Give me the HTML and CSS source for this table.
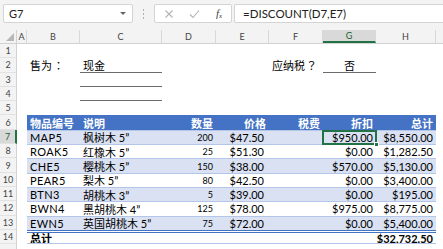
FILE: index.html
```html
<!DOCTYPE html>
<html lang="zh">
<head>
<meta charset="utf-8">
<title>Sheet</title>
<link rel="stylesheet" href="styles.css">
</head>
<body>
<div class="app">
  <div class="toolbar">
    <div class="namebox"><span class="ref">G7</span><span class="caret"></span></div>
    <div class="dots"><i></i><i></i><i></i></div>
    <div class="fxbox">
      <svg class="ico" width="10" height="10" viewBox="0 0 10 10"><path d="M1.5 1.5 L8.5 8.5 M8.5 1.5 L1.5 8.5" stroke="#b3b3b3" stroke-width="1.1" fill="none"/></svg>
      <svg class="ico" width="11" height="10" viewBox="0 0 11 10"><path d="M1 5.5 L4 8.5 L10 1.5" stroke="#b3b3b3" stroke-width="1.1" fill="none"/></svg>
      <span class="fx">f<sub>x</sub></span>
    </div>
    <div class="formula">=DISCOUNT(D7,E7)</div>
  </div>

  <div class="sheet">
    <div class="row colhead">
      <div class="corner"><span class="tri"></span></div>
      <div class="ch">A</div><div class="ch">B</div><div class="ch">C</div><div class="ch">D</div>
      <div class="ch">E</div><div class="ch">F</div><div class="ch sel">G</div><div class="ch">H</div><div class="ch last"></div>
    </div>

    <div class="row"><div class="rh">1</div><div></div><div></div><div></div><div></div><div></div><div></div><div></div><div></div><div></div></div>
    <div class="row"><div class="rh">2</div><div></div><div class="c">售为<span class="pun">：</span></div><div class="c line">现金</div><div></div><div></div><div class="c">应纳税<span class="pun">？</span></div><div class="c line ctr">否</div><div></div><div></div></div>
    <div class="row"><div class="rh">3</div><div></div><div></div><div class="c line"></div><div></div><div></div><div></div><div></div><div></div><div></div></div>
    <div class="row"><div class="rh">4</div><div></div><div></div><div class="c line"></div><div></div><div></div><div></div><div></div><div></div><div></div></div>
    <div class="row"><div class="rh">5</div><div></div><div></div><div></div><div></div><div></div><div></div><div></div><div></div><div></div></div>

    <div class="row thead"><div class="rh">6</div><div></div>
      <div class="c">物品编号</div><div class="c">说明</div><div class="c r">数量</div><div class="c r">价格</div><div class="c r">税费</div><div class="c r">折扣</div><div class="c r">总计</div><div></div>
    </div>

    <div class="row band"><div class="rh sel">7</div><div></div>
      <div class="c code">MAP5</div><div class="c">枫树木 5”</div><div class="c r qty">200</div><div class="c r pr">$47.50</div><div class="c"></div><div class="c r active">$950.00<span class="handle"></span></div><div class="c r">$8,550.00</div><div></div>
    </div>
    <div class="row plain"><div class="rh">8</div><div></div>
      <div class="c code">ROAK5</div><div class="c">红橡木 5”</div><div class="c r qty">25</div><div class="c r pr">$51.30</div><div class="c"></div><div class="c r">$0.00</div><div class="c r">$1,282.50</div><div></div>
    </div>
    <div class="row band"><div class="rh">9</div><div></div>
      <div class="c code">CHE5</div><div class="c">樱桃木 5”</div><div class="c r qty">150</div><div class="c r pr">$38.00</div><div class="c"></div><div class="c r">$570.00</div><div class="c r">$5,130.00</div><div></div>
    </div>
    <div class="row plain"><div class="rh">10</div><div></div>
      <div class="c code">PEAR5</div><div class="c">梨木 5”</div><div class="c r qty">80</div><div class="c r pr">$42.50</div><div class="c"></div><div class="c r">$0.00</div><div class="c r">$3,400.00</div><div></div>
    </div>
    <div class="row band"><div class="rh">11</div><div></div>
      <div class="c code">BTN3</div><div class="c">胡桃木 3”</div><div class="c r qty">5</div><div class="c r pr">$39.00</div><div class="c"></div><div class="c r">$0.00</div><div class="c r">$195.00</div><div></div>
    </div>
    <div class="row plain"><div class="rh">12</div><div></div>
      <div class="c code">BWN4</div><div class="c">黑胡桃木 4”</div><div class="c r qty">125</div><div class="c r pr">$78.00</div><div class="c"></div><div class="c r">$975.00</div><div class="c r">$8,775.00</div><div></div>
    </div>
    <div class="row band"><div class="rh">13</div><div></div>
      <div class="c code">EWN5</div><div class="c">英国胡桃木 5”</div><div class="c r qty">75</div><div class="c r pr">$72.00</div><div class="c"></div><div class="c r">$0.00</div><div class="c r">$5,400.00</div><div></div>
    </div>
    <div class="row total"><div class="rh">14</div><div></div>
      <div class="c b">总计</div><div class="c"></div><div class="c"></div><div class="c"></div><div class="c"></div><div class="c"></div><div class="c r b">$32,732.50</div><div></div>
    </div>
    <div class="row"><div class="rh"></div><div></div><div></div><div></div><div></div><div></div><div></div><div></div><div></div><div></div></div>
  </div>
</div>
</body>
</html>
```

FILE: styles.css
```css
* { box-sizing: border-box; }
html, body { margin: 0; padding: 0; }
body {
  width: 443px;
  height: 249px;
  overflow: hidden;
  background: #ffffff;
  font-family: Lato, "Noto Sans CJK SC", sans-serif;
  color: #000;
}
.app { width: 443px; height: 249px; overflow: hidden; }

.toolbar {
  height: 30px;
  background: #f3f3f3;
  display: flex;
  align-items: flex-start;
  padding: 4px 0 0 3px;
}
.namebox {
  width: 130px;
  height: 19px;
  background: #fff;
  border: 1px solid #d4d4d4;
  border-radius: 2px;
  display: flex;
  align-items: center;
  justify-content: space-between;
  padding: 0 6px 0 5px;
  font-size: 11px;
  color: #222;
}
.caret {
  width: 0; height: 0;
  border-left: 3px solid transparent;
  border-right: 3px solid transparent;
  border-top: 3px solid #666;
}
.dots {
  width: 21px;
  height: 19px;
  display: flex;
  flex-direction: column;
  align-items: center;
  justify-content: center;
  gap: 2px;
}
.dots i { display: block; width: 1px; height: 2px; background: #b0b0b0; }
.fxbox {
  width: 78px;
  height: 19px;
  background: #fff;
  border: 1px solid #d4d4d4;
  border-radius: 2px;
  display: flex;
  align-items: center;
  padding: 0 4px 0 9px;
  gap: 15px;
}
.fx {
  font-family: "Liberation Serif", serif;
  font-style: italic;
  font-size: 11px;
  color: #444;
  margin-left: 1px;
}
.fx sub { font-size: 7px; vertical-align: -1px; }
.formula {
  margin-left: 2px;
  flex: 1;
  height: 19px;
  background: #fff;
  border: 1px solid #d4d4d4;
  border-right: none;
  border-radius: 2px 0 0 2px;
  display: flex;
  align-items: center;
  padding-left: 8px;
  font-size: 11.5px;
  color: #222;
}

.sheet { display: flex; flex-direction: column; }
.row {
  display: grid;
  grid-template-columns: 17px 10px 53px 82px 54px 53px 54px 53px 60px 1fr;
  height: 14.3px;
  font-size: 11px;
}
.row > div { min-width: 0; }
.colhead {
  height: 14px;
  background: #f3f3f3;
  border-bottom: 1px solid #d2d2d2;
}
.corner { position: relative; border-right: 1px solid #d2d2d2; }
.tri {
  position: absolute;
  right: 2px; bottom: 2px;
  width: 0; height: 0;
  border-left: 8px solid transparent;
  border-bottom: 8px solid #b8b8b8;
}
.ch {
  border-right: 1px solid #d8d8d8;
  display: flex;
  align-items: center;
  justify-content: center;
  font-size: 9px;
  color: #444;
}
.ch.sel {
  background: #d9d9d9;
  border-bottom: 2px solid #217346;
  color: #1e5e36;
}
.ch.last { border-right: none; }
.rh {
  background: #f3f3f3;
  border-right: 1px solid #d2d2d2;
  border-bottom: 1px solid #e2e2e2;
  display: flex;
  align-items: center;
  justify-content: center;
  font-size: 9px;
  color: #444;
}
.rh.sel {
  background: #d9d9d9;
  border-right: 2px solid #217346;
  color: #1e5e36;
}
.c {
  display: flex;
  align-items: center;
  padding: 0 3px;
  white-space: nowrap;
  overflow: hidden;
}
.pun { font-family: "Noto Sans CJK JP", sans-serif; margin-left: 1px; }
.r { justify-content: flex-end; }
.ctr { justify-content: center; }
.line { border-bottom: 1px solid #6b6b6b; }
.b { font-weight: 700; }
.qty { font-size: 9px; }
.pr { padding-right: 5px; }
.code { letter-spacing: 0.4px; }

.thead .c {
  background: #4472c4;
  color: #fff;
  font-weight: 700;
}
.band .c {
  background: #d9e1f2;
  border-top: 1px solid #b4c6e7;
}
.plain .c {
  background: #fff;
  border-top: 1px solid #b4c6e7;
}
.total .c {
  border-top: 3px double #4472c4;
  border-bottom: 1px solid #b4c6e7;
}
.active { position: relative; overflow: visible; }
.active::after {
  content: "";
  position: absolute;
  left: -1px; top: -1px; right: -1px; bottom: -1px;
  border: 2px solid #217346;
}
.handle {
  position: absolute;
  right: -3px; bottom: -3px;
  width: 5px; height: 5px;
  background: #217346;
  border: 1px solid #fff;
  z-index: 2;
}
```
